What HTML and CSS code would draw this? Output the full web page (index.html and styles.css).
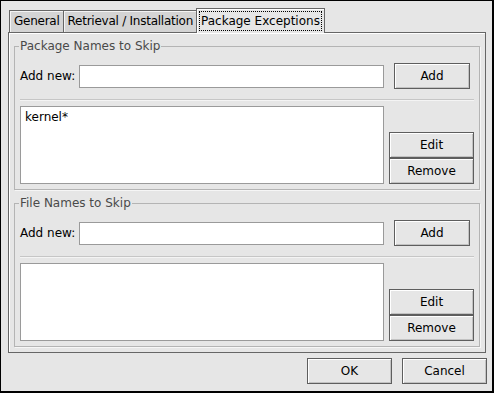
FILE: index.html
```html
<!DOCTYPE html>
<html>
<head>
    <meta charset="UTF-8">
    <title>Package Exceptions</title>
    <link rel="stylesheet" href="styles.css">
</head>
<body>
    <div class="window">
        <div class="notebook">
            <div class="tabs">
                <div class="tab">General</div>
                <div class="tab">Retrieval / Installation</div>
                <div class="tab active"><span class="focus">Package Exceptions</span></div>
            </div>
            <div class="panel">
                <fieldset class="frame">
                    <legend>Package Names to Skip</legend>
                    <div class="add-row">
                        <label>Add new:</label>
                        <input class="entry" type="text">
                        <button class="btn add">Add</button>
                    </div>
                    <div class="separator"></div>
                    <div class="list-row">
                        <div class="list">
                            <div class="item">kernel*</div>
                        </div>
                        <div class="list-buttons">
                            <button class="btn">Edit</button>
                            <button class="btn">Remove</button>
                        </div>
                    </div>
                </fieldset>
                <fieldset class="frame second">
                    <legend>File Names to Skip</legend>
                    <div class="add-row">
                        <label>Add new:</label>
                        <input class="entry" type="text">
                        <button class="btn add">Add</button>
                    </div>
                    <div class="separator"></div>
                    <div class="list-row">
                        <div class="list"></div>
                        <div class="list-buttons">
                            <button class="btn">Edit</button>
                            <button class="btn">Remove</button>
                        </div>
                    </div>
                </fieldset>
            </div>
        </div>
        <div class="dialog-buttons">
            <button class="btn">OK</button>
            <button class="btn">Cancel</button>
        </div>
    </div>
</body>
</html>
```

FILE: styles.css
```css
* {
    box-sizing: border-box;
}

body {
    margin: 0;
    font-family: "DejaVu Sans", Verdana, sans-serif;
    font-size: 12px;
    color: #000;
}

.window {
    width: 494px;
    height: 393px;
    background-color: #e6e6e6;
    border: 1px solid #000;
    border-right-width: 2px;
    border-bottom-width: 2px;
    padding: 7px 0 0 7px;
}

.notebook {
    width: 478px;
}

.tabs {
    display: flex;
    align-items: flex-end;
    height: 24px;
    padding-left: 1px;
}

.tab {
    height: 22px;
    line-height: 20px;
    padding: 0 3px 0 4px;
    letter-spacing: -0.25px;
    background-color: #d4d4d4;
    border: 1px solid #666;
    border-bottom: none;
    box-shadow: inset 1px 1px 0 #f4f4f4;
    margin-right: -1px;
    white-space: nowrap;
}

.tab.active {
    position: relative;
    z-index: 1;
    height: 25px;
    margin-bottom: -1px;
    padding: 2px;
    letter-spacing: 0;
    background-color: #e6e6e6;
    box-shadow: inset 1px 1px 0 #fff;
}

.focus {
    display: block;
    line-height: 18px;
    padding: 0 1px;
    border: 1px dotted #000;
}

.panel {
    border: 1px solid #666;
    box-shadow: inset 1px 1px 0 #fff;
    padding: 6px 5px 5px 5px;
}

.frame {
    margin: 0;
    min-width: 0;
    padding: 10px 5px 5px 5px;
    border: 1px solid #b4b4b4;
    box-shadow: 1px 1px 0 #f6f6f6;
}

.frame.second {
    margin-top: 6px;
}

.frame legend {
    padding: 0 1px;
    margin-left: -1px;
    line-height: 14px;
    color: #4a4a4a;
}

.add-row {
    display: flex;
    align-items: center;
    height: 26px;
}

.add-row label {
    width: 59px;
}

.entry {
    width: 305px;
    height: 23px;
    margin: 0;
    border: 1px solid #9a9a9a;
    background-color: #fff;
    font: inherit;
}

.btn {
    height: 26px;
    margin: 0;
    padding: 0;
    font: inherit;
    color: #000;
    background-color: #e6e6e6;
    border: 1px solid #5e5e5e;
    box-shadow: inset 1px 1px 0 #fff, inset -1px -1px 0 #c2c2c2;
}

.btn.add {
    width: 76px;
    margin-left: 10px;
}

.separator {
    margin: 10px 0 5px 0;
    border-top: 1px solid #c6c6c6;
    border-bottom: 1px solid #f4f4f4;
}

.list-row {
    display: flex;
    align-items: flex-end;
    gap: 5px;
}

.list {
    width: 364px;
    height: 78px;
    border: 1px solid #9a9a9a;
    background-color: #fff;
    padding: 3px 4px;
}

.item {
    line-height: 14px;
}

.list-buttons {
    display: flex;
    flex-direction: column;
    width: 85px;
}

.dialog-buttons {
    display: flex;
    justify-content: flex-end;
    gap: 10px;
    width: 479px;
    margin-top: 5px;
}

.dialog-buttons .btn {
    width: 85px;
}
```
